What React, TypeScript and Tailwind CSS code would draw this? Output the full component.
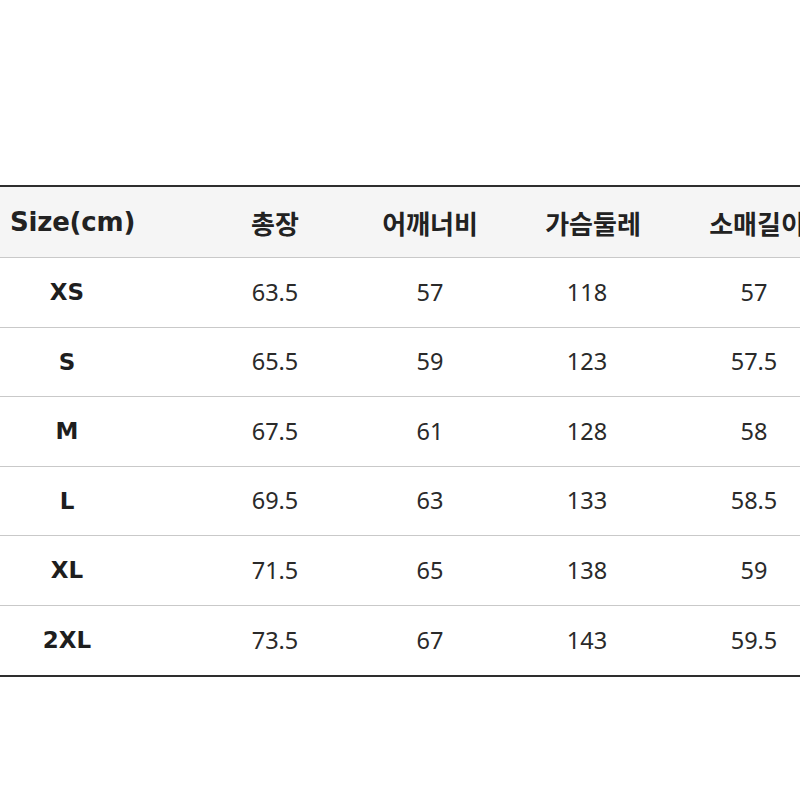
import React from 'react';

const headers = ['총장', '어깨너비', '가슴둘레', '소매길이'];
// small nudges so the header labels line up like the source image
const headerShift = ['', '', 'pl-[12px]', 'pl-[6px]'];

const rows: [string, string, string, string, string][] = [
  ['XS', '63.5', '57', '118', '57'],
  ['S', '65.5', '59', '123', '57.5'],
  ['M', '67.5', '61', '128', '58'],
  ['L', '69.5', '63', '133', '58.5'],
  ['XL', '71.5', '65', '138', '59'],
  ['2XL', '73.5', '67', '143', '59.5'],
];

// columns 2-5 sit at uneven spacing in the source image
const colClass = [
  'w-[134px] shrink-0',
  'w-[120px] shrink-0 ml-[81px]',
  'w-[120px] shrink-0 ml-[35px]',
  'w-[120px] shrink-0 ml-[37px]',
  'w-[120px] shrink-0 ml-[47px]',
];

const App: React.FC = () => {
  return (
    <div className="w-[800px] h-[800px] bg-white overflow-hidden pt-[185px]">
      <div className="w-full border-t-2 border-b-2 border-t-[#2e2e2e] border-b-[#2e2e2e]">
        {/* 헤더 */}
        <div className="flex items-center h-[71px] bg-[#f5f5f5] border-b border-[#c9c9c9]">
          <div className={`${colClass[0]} pl-[10px] text-[26px] font-bold text-[#222] font-['DejaVu_Sans',sans-serif] tracking-[-0.2px]`}>
            Size(cm)
          </div>
          {headers.map((h, i) => (
            <div
              key={h}
              className={`${colClass[i + 1]} ${headerShift[i]} text-center whitespace-nowrap text-[26px] font-semibold text-[#222] font-['Noto_Sans_CJK_KR',sans-serif]`}
            >
              {h}
            </div>
          ))}
        </div>

        {/* 사이즈 행 */}
        {rows.map((r, ri) => (
          <div
            key={r[0]}
            className={`flex items-center h-[69.5px] ${ri < rows.length - 1 ? 'border-b border-[#c9c9c9]' : ''}`}
          >
            <div className={`${colClass[0]} text-center text-[23px] font-bold text-[#1e1e1e] font-['DejaVu_Sans',sans-serif]`}>
              {r[0]}
            </div>
            {r.slice(1).map((v, ci) => (
              <div
                key={ci}
                className={`${colClass[ci + 1]} text-center text-[23.5px] text-[#2a2a2a] font-['Noto_Sans',sans-serif]`}
              >
                {v}
              </div>
            ))}
          </div>
        ))}
      </div>
    </div>
  );
};

export default App;
